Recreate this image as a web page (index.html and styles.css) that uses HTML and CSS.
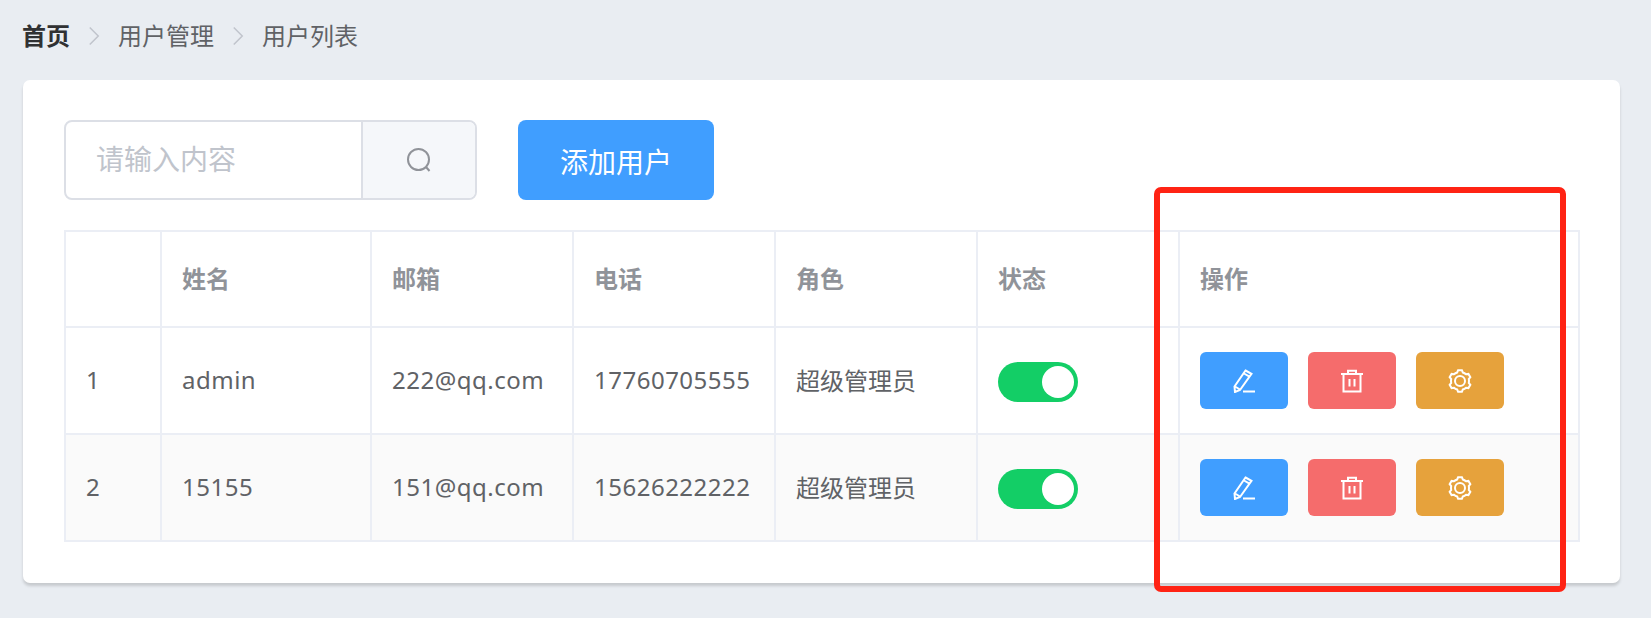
FILE: index.html
```html
<!DOCTYPE html>
<html lang="zh-CN">
<head>
    <meta charset="UTF-8">
    <meta name="viewport" content="width=device-width, initial-scale=1.0">
    <title>用户列表</title>
    <link rel="stylesheet" href="styles.css">
</head>
<body>
    <div class="breadcrumb">
        <span class="crumb crumb-home">首页</span>
        <svg class="crumb-sep" viewBox="0 0 10 17"><path d="M1 .5 9 8.5 1 16.500"/></svg>
        <span class="crumb">用户管理</span>
        <svg class="crumb-sep" viewBox="0 0 10 17"><path d="M1 .5 9 8.5 1 16.500"/></svg>
        <span class="crumb">用户列表</span>
    </div>

    <div class="card">
        <div class="toolbar">
            <div class="search">
                <div class="search-input">请输入内容</div>
                <div class="search-btn">
                    <svg class="icon search-icon" viewBox="0 0 24 24"><circle cx="11.500" cy="11.500" r="10.500"/><path d="M19 19l3.500 4"/></svg>
                </div>
            </div>
            <button class="add-btn">添加用户</button>
        </div>

        <table class="user-table">
            <thead>
                <tr>
                    <th class="col-index"></th>
                    <th class="col-name">姓名</th>
                    <th class="col-mid">邮箱</th>
                    <th class="col-mid">电话</th>
                    <th class="col-mid">角色</th>
                    <th class="col-mid">状态</th>
                    <th class="col-actions">操作</th>
                </tr>
            </thead>
            <tbody>
                <tr>
                    <td>1</td>
                    <td class="cell-latin">admin</td>
                    <td class="cell-latin">222@qq.com</td>
                    <td class="cell-latin">17760705555</td>
                    <td>超级管理员</td>
                    <td><span class="switch"><span class="switch-knob"></span></span></td>
                    <td>
                        <div class="actions">
                            <button class="act act-edit">
                                <svg class="icon" viewBox="0 0 24 24"><path d="M13.500 1.500 19.500 4.800 8 21 3 23 2.500 17.500ZM12 4.500l5.500 3.200M3 17.500l5 3M11 22.500h12"/></svg>
                            </button>
                            <button class="act act-delete">
                                <svg class="icon" viewBox="0 0 24 24"><path d="M1 5h22M8 5V1.800h8V5M3.500 5v17.500h17V5M9.500 10v7.500M14.500 10v7.500"/></svg>
                            </button>
                            <button class="act act-setting">
                                <svg class="icon" viewBox="0 0 24 24"><path d="M14.780 3.440 13.910 1.170H10.090L9.220 3.440A9 9 0 0 0 5.980 5.310L3.570 4.930 1.660 8.240 3.200 10.130A9 9 0 0 0 3.200 13.870L1.660 15.760 3.570 19.070 5.980 18.690A9 9 0 0 0 9.220 20.560L10.090 22.830H13.910L14.780 20.560A9 9 0 0 0 18.020 18.690L20.430 19.070 22.340 15.760 20.800 13.870A9 9 0 0 0 20.800 10.130L22.340 8.240 20.430 4.930 18.020 5.310A9 9 0 0 0 14.780 3.440Z"/><circle cx="12" cy="12" r="5"/></svg>
                            </button>
                        </div>
                    </td>
                </tr>
                <tr class="row-striped">
                    <td>2</td>
                    <td class="cell-latin">15155</td>
                    <td class="cell-latin">151@qq.com</td>
                    <td class="cell-latin">15626222222</td>
                    <td>超级管理员</td>
                    <td><span class="switch"><span class="switch-knob"></span></span></td>
                    <td>
                        <div class="actions">
                            <button class="act act-edit">
                                <svg class="icon" viewBox="0 0 24 24"><path d="M13.500 1.500 19.500 4.800 8 21 3 23 2.500 17.500ZM12 4.500l5.500 3.200M3 17.500l5 3M11 22.500h12"/></svg>
                            </button>
                            <button class="act act-delete">
                                <svg class="icon" viewBox="0 0 24 24"><path d="M1 5h22M8 5V1.800h8V5M3.500 5v17.500h17V5M9.500 10v7.500M14.500 10v7.500"/></svg>
                            </button>
                            <button class="act act-setting">
                                <svg class="icon" viewBox="0 0 24 24"><path d="M14.780 3.440 13.910 1.170H10.090L9.220 3.440A9 9 0 0 0 5.980 5.310L3.570 4.930 1.660 8.240 3.200 10.130A9 9 0 0 0 3.200 13.870L1.660 15.760 3.570 19.070 5.980 18.690A9 9 0 0 0 9.220 20.560L10.090 22.830H13.910L14.780 20.560A9 9 0 0 0 18.020 18.690L20.430 19.070 22.340 15.760 20.800 13.870A9 9 0 0 0 20.800 10.130L22.340 8.240 20.430 4.930 18.020 5.310A9 9 0 0 0 14.780 3.440Z"/><circle cx="12" cy="12" r="5"/></svg>
                            </button>
                        </div>
                    </td>
                </tr>
            </tbody>
        </table>
    </div>

    <div class="highlight-box"></div>
</body>
</html>
```
FILE: styles.css
```css
html, body {
    height: 100%;
}
body {
    margin: 0;
    padding: 0 23px;
    box-sizing: border-box;
    background-color: #e9edf2;
    font-family: "Noto Sans", "Noto Sans CJK SC", sans-serif;
    font-size: 24px;
    color: #606266;
    overflow: hidden;
    position: relative;
}
.breadcrumb {
    height: 80px;
    padding-bottom: 8px;
    box-sizing: border-box;
    display: flex;
    align-items: center;
    margin-left: -1px;
}
.crumb {
    line-height: 32px;
}
.crumb-home {
    font-weight: 700;
    color: #303133;
}
.crumb-sep {
    width: 12px;
    height: 18px;
    margin: 0 18px 0 18px;
}
.crumb-sep path {
    fill: none;
    stroke: #c0c4cc;
    stroke-width: 1.400;
}
.card {
    width: 1597px;
    height: 503px;
    box-sizing: border-box;
    padding: 40px 41px;
    background-color: #fff;
    border-radius: 7px;
    box-shadow: 0 3px 3px rgba(0, 0, 0, 0.15);
}
.toolbar {
    display: flex;
    gap: 41px;
    height: 80px;
    margin-bottom: 30px;
}
.search {
    width: 413px;
    display: flex;
    box-sizing: border-box;
    border: 2px solid #dcdfe6;
    border-radius: 8px;
    overflow: hidden;
}
.search-input {
    flex: 1;
    padding-left: 30px;
    font-size: 28px;
    line-height: 74px;
    color: #c0c4cc;
}
.search-btn {
    width: 114px;
    box-sizing: border-box;
    border-left: 2px solid #dcdfe6;
    background-color: #f5f7fa;
    display: flex;
    align-items: center;
    justify-content: center;
}
.search-icon {
    width: 26px;
    height: 26px;
    stroke: #909399 !important;
}
.add-btn {
    width: 196px;
    padding: 2px 0 0;
    border: none;
    border-radius: 8px;
    background-color: #409eff;
    color: #fff;
    font-family: inherit;
    font-size: 28px;
    cursor: pointer;
}
.user-table {
    width: 1516px;
    table-layout: fixed;
    border-collapse: collapse;
}
.user-table th, .user-table td {
    border: 2px solid #ebeef5;
    padding: 0 20px 2px;
    text-align: left;
    white-space: nowrap;
}
.user-table th {
    height: 90px;
    padding-bottom: 4px;
    color: #909399;
    font-weight: 700;
}
.user-table td {
    height: 103px;
}
.col-index {
    width: 54px;
}
.col-name {
    width: 168px;
}
.col-mid {
    width: 160px;
}
.cell-latin {
    letter-spacing: 0.5px;
}
.row-striped td {
    background-color: #fafafa;
}
.switch {
    display: block;
    width: 80px;
    height: 40px;
    margin-top: 4px;
    border-radius: 20px;
    background-color: #13ce66;
    position: relative;
}
.switch-knob {
    position: absolute;
    top: 4px;
    right: 4px;
    width: 32px;
    height: 32px;
    border-radius: 50%;
    background-color: #fff;
}
.actions {
    display: flex;
    gap: 20px;
    margin-top: 2px;
}
.act {
    width: 88px;
    height: 57px;
    padding: 0;
    border: none;
    border-radius: 6px;
    display: flex;
    align-items: center;
    justify-content: center;
    cursor: pointer;
}
.act-edit {
    background-color: #409eff;
}
.act-delete {
    background-color: #f56c6c;
}
.act-setting {
    background-color: #e6a23c;
}
.icon {
    width: 24px;
    height: 24px;
    fill: none;
    stroke: #fff;
    stroke-width: 2;
}
.highlight-box {
    position: absolute;
    left: 1154px;
    top: 187px;
    width: 412px;
    height: 405px;
    box-sizing: border-box;
    border: 6px solid #ff2314;
    border-radius: 7px;
}
```
